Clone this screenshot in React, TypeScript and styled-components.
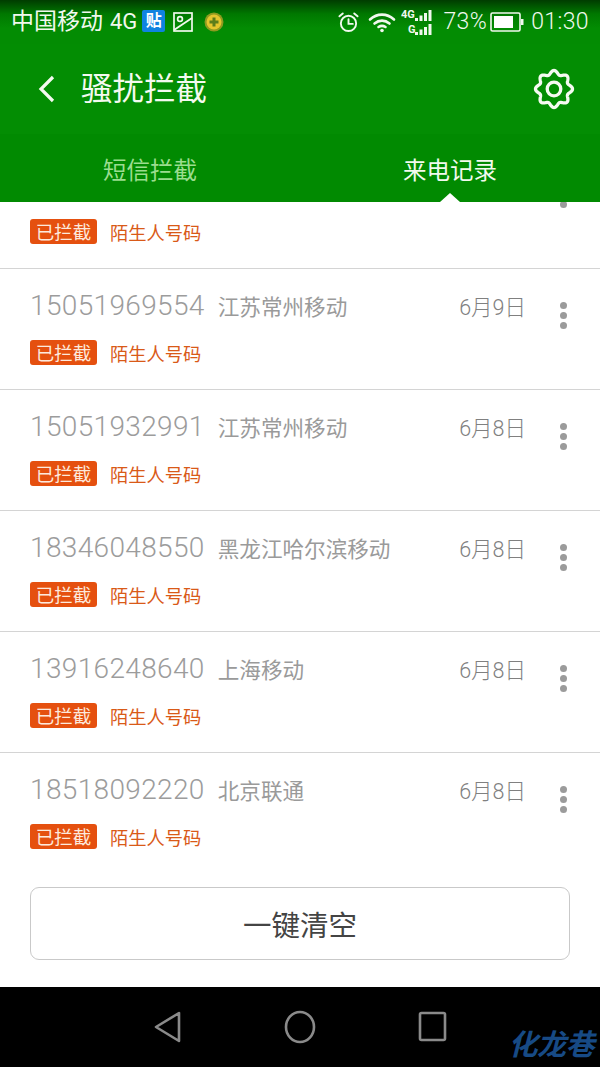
import React from "react";
import styled, { createGlobalStyle } from "styled-components";

const Global = createGlobalStyle`
  html, body { margin: 0; padding: 0; background: #000; }
  #root { width: 600px; height: 1067px; }
  * { box-sizing: border-box; }
`;

const Screen = styled.div`
  width: 600px;
  height: 1067px;
  position: relative;
  display: flex;
  flex-direction: column;
  overflow: hidden;
  background: #fff;
  font-family: Roboto, "Noto Sans CJK SC", sans-serif;
`;

const StatusBar = styled.div`
  height: 44px;
  flex: none;
  display: flex;
  align-items: center;
  justify-content: space-between;
  padding: 0 11px 0 11px;
  color: #f1f8ee;
  background: linear-gradient(#003c00 0, #007800 14px, #038c03 28px, #038c03 100%);
`;

const StatusGroup = styled.div`
  display: flex;
  align-items: center;
`;

const Carrier = styled.span`
  font-size: 23px;
  line-height: 44px;
  white-space: nowrap;
`;

const Network = styled.span`
  font-size: 22px;
  line-height: 44px;
  margin-left: 7px;
`;

const TieBadge = styled.span`
  width: 23px;
  height: 22px;
  margin-left: 5px;
  margin-top: -2px;
  border-radius: 2px;
  background: #0f83e0;
  color: #fff;
  font-size: 16px;
  font-weight: 700;
  line-height: 22px;
  text-align: center;
`;

const StatusText = styled.span<{ $ml: number }>`
  margin-left: ${(p) => p.$ml}px;
  font-size: 23px;
  line-height: 44px;
  letter-spacing: 0.4px;
  font-weight: 300;
`;

const IconSlot = styled.span<{ $ml: number }>`
  display: flex;
  margin-left: ${(p) => p.$ml}px;
`;

const Header = styled.div`
  height: 90px;
  flex: none;
  display: flex;
  align-items: center;
  padding: 0 26px 0 36px;
  background: #038d03;
`;

const Title = styled.h1`
  margin: 2px 0 0 25px;
  flex: 1;
  font-size: 31.5px;
  font-weight: 400;
  line-height: 44px;
  color: #f4faf0;
`;

const Tabs = styled.div`
  height: 68px;
  flex: none;
  display: grid;
  grid-template-columns: 1fr 1fr;
  background: #018a01;
`;

const Tab = styled.div<{ $active?: boolean }>`
  position: relative;
  display: flex;
  align-items: center;
  justify-content: center;
  padding-top: 2px;
  font-size: 23.5px;
  color: ${(p) => (p.$active ? "#f2faee" : "#9bdd8f")};
  ${(p) =>
    p.$active &&
    `&::after {
      content: "";
      position: absolute;
      left: 50%;
      bottom: 0;
      margin-left: -10px;
      border-left: 10px solid transparent;
      border-right: 10px solid transparent;
      border-bottom: 9px solid #fff;
    }`}
`;

const Content = styled.div`
  flex: 1;
  min-height: 0;
  overflow: hidden;
  background: #fff;
  display: flex;
  flex-direction: column;
`;

const List = styled.div`
  margin-top: -54px;
`;

const Row = styled.div`
  position: relative;
  height: 121px;
  padding: 22px 0 0 30px;
  border-bottom: 1px solid #d4d4d4;
  &:last-child {
    border-bottom: none;
  }
`;

const TopLine = styled.div`
  height: 30px;
  display: flex;
  align-items: center;
  padding-right: 75px;
`;

const PhoneNumber = styled.span`
  font-size: 28px;
  font-weight: 300;
  line-height: 30px;
  color: #9c9c9c;
  margin-top: 0;
  letter-spacing: 0.35px;
`;

const Region = styled.span`
  flex: 1;
  margin: 4px 0 0 13px;
  font-size: 21.6px;
  line-height: 30px;
  color: #9a9a9a;
`;

const DateText = styled.span`
  margin: 4px -1px 0 0;
  font-size: 21.5px;
  font-weight: 300;
  line-height: 30px;
  color: #808080;
`;

const More = styled.div`
  position: absolute;
  left: 560px;
  top: 33px;
  display: flex;
  flex-direction: column;
  gap: 3px;
`;

const Dot = styled.span`
  width: 7px;
  height: 7px;
  border-radius: 50%;
  background: #9b9b9b;
`;

const TagLine = styled.div`
  margin-top: 19px;
  height: 25px;
  display: flex;
  align-items: center;
`;

const Tag = styled.span`
  width: 67px;
  height: 25px;
  padding-top: 2px;
  border-radius: 3px;
  background: #e5500f;
  color: #fde9dc;
  font-size: 18.5px;
  line-height: 25px;
  text-align: center;
`;

const Reason = styled.span`
  margin: 3px 0 0 13px;
  font-size: 18.3px;
  line-height: 25px;
  color: #d95a18;
`;

const ClearButton = styled.button`
  display: block;
  width: 540px;
  height: 74px;
  margin: 13px 30px 27px;
  padding: 0;
  background: #fff;
  border: 1px solid #c9c9c9;
  border-radius: 9px;
  font-family: inherit;
  font-size: 28.5px;
  color: #444;
`;

const NavBar = styled.div`
  height: 80px;
  flex: none;
  background: #000;
  display: flex;
  align-items: flex-start;
  justify-content: center;
  gap: 101px;
  padding: 23px 0 0 0;
`;

const Watermark = styled.span`
  position: absolute;
  right: 6px;
  bottom: 10px;
  font-size: 29px;
  line-height: 24px;
  letter-spacing: -0.5px;
  font-style: italic;
  font-weight: 700;
  color: #174a85;
`;

const Alarm = () => (
  <svg width="21" height="22" viewBox="0 0 22 22" fill="none" stroke="#f1f8ee" strokeWidth="2">
    <circle cx="11" cy="12.5" r="8" />
    <path d="M11 8v5h4.5M1.5 5 5 2M20.5 5 17 2" strokeLinecap="round" />
  </svg>
);

const Wifi = () => (
  <svg width="28" height="22" viewBox="0 0 28 22" fill="none" stroke="#f1f8ee" strokeWidth="2.6" strokeLinecap="round">
    <path d="M2 8.5C9 2 19 2 26 8.5M6.5 12.5C11 8.7 17 8.7 21.5 12.5M10.500 16C12.600 14.600 15.400 14.600 17.500 16" />
    <circle cx="14" cy="19.5" r="1.8" fill="#f1f8ee" stroke="none" />
  </svg>
);

const Bars = () => (
  <g fill="#f1f8ee">
    <rect x="0" y="8" width="3" height="3" />
    <rect x="4.5" y="5.5" width="3" height="5.5" />
    <rect x="9" y="3" width="3" height="8" />
    <rect x="13.5" y="0" width="3" height="11" />
  </g>
);

const Signal = () => (
  <svg width="31" height="28" viewBox="0 0 31 28">
    <text x="0" y="10" fontSize="11" fontWeight="700" fill="#f1f8ee" fontFamily="Roboto, sans-serif">4G</text>
    <text x="7" y="25" fontSize="11" fontWeight="700" fill="#f1f8ee" fontFamily="Roboto, sans-serif">G</text>
    <g transform="translate(14 2)"><Bars /></g>
    <g transform="translate(14 16)"><Bars /></g>
  </svg>
);

const Battery = () => (
  <svg width="34" height="20" viewBox="0 0 34 20">
    <rect x="1" y="1" width="29" height="18" rx="1.5" fill="none" stroke="#f1f8ee" strokeWidth="1.6" />
    <rect x="4" y="4" width="19" height="12" fill="#fff" />
    <rect x="31" y="7" width="2.5" height="6" fill="#f1f8ee" />
  </svg>
);

const PictureIcon = () => (
  <svg width="20" height="20" viewBox="0 0 20 20" fill="none" stroke="#f1f8ee" strokeWidth="1.7" style={{ marginLeft: 8 }}>
    <rect x="1" y="1" width="18" height="18" />
    <circle cx="7" cy="7" r="2.4" />
    <path d="M1 18 19 6" />
  </svg>
);

const Ball = () => (
  <svg width="20" height="20" viewBox="0 0 20 20" style={{ marginLeft: 11 }}>
    <circle cx="10" cy="10" r="9.5" fill="#8f9a20" />
    <circle cx="10" cy="10" r="7.5" fill="#e4c52e" />
    <path d="M8.5 5.5h3v3h3v3h-3v3h-3v-3h-3v-3h3z" fill="#5c7d1a" />
  </svg>
);

const BackIcon = () => (
  <svg width="20" height="30" viewBox="0 0 20 30" fill="none" stroke="#f4faf0" strokeWidth="3.2">
    <path d="M17 3 5 15l12 12" />
  </svg>
);

const gearPath = (() => {
  const pts: string[] = [];
  for (let i = 0; i < 180; i++) {
    const a = (i / 180) * Math.PI * 2;
    const r = 16.6 + 1.9 * Math.cos(8 * a);
    pts.push(`${(21 + r * Math.cos(a)).toFixed(2)} ${(21 + r * Math.sin(a)).toFixed(2)}`);
  }
  return `M${pts.join("L")}Z`;
})();

const GearIcon = () => (
  <svg width="42" height="42" viewBox="0 0 42 42" fill="none" stroke="#f6fbf2" strokeWidth="3.3" strokeLinejoin="round" style={{ marginRight: -1 }}>
    <path d={gearPath} />
    <circle cx="21" cy="21" r="6.800" />
  </svg>
);

const NavBack = () => (
  <svg width="30" height="34" viewBox="0 0 30 34" fill="none" stroke="#8a8a8a" strokeWidth="2.6" strokeLinejoin="round">
    <path d="M26 3v28L3 17z" />
  </svg>
);

const NavHome = () => (
  <svg width="32" height="34" viewBox="0 0 32 34" fill="none" stroke="#8a8a8a" strokeWidth="2.6">
    <ellipse cx="16" cy="17" rx="14" ry="15" />
  </svg>
);

const NavRecent = () => (
  <svg width="30" height="34" viewBox="0 0 30 34" fill="none" stroke="#8a8a8a" strokeWidth="2.6" strokeLinejoin="round">
    <rect x="3" y="3" width="25" height="27" rx="1.500" />
  </svg>
);

type Call = { phone?: string; region?: string; date?: string };

const calls: Call[] = [
  {},
  { phone: "15051969554", region: "江苏常州移动", date: "6月9日" },
  { phone: "15051932991", region: "江苏常州移动", date: "6月8日" },
  { phone: "18346048550", region: "黑龙江哈尔滨移动", date: "6月8日" },
  { phone: "13916248640", region: "上海移动", date: "6月8日" },
  { phone: "18518092220", region: "北京联通", date: "6月8日" },
];

export default function App() {
  return (
    <Screen>
      <Global />
      <StatusBar>
        <StatusGroup>
          <Carrier>中国移动</Carrier>
          <Network>4G</Network>
          <TieBadge>贴</TieBadge>
          <PictureIcon />
          <Ball />
        </StatusGroup>
        <StatusGroup>
          <IconSlot $ml={0}><Alarm /></IconSlot>
          <IconSlot $ml={9}><Wifi /></IconSlot>
          <IconSlot $ml={5}><Signal /></IconSlot>
          <StatusText $ml={11}>73%</StatusText>
          <IconSlot $ml={3}><Battery /></IconSlot>
          <StatusText $ml={7}>01:30</StatusText>
        </StatusGroup>
      </StatusBar>
      <Header>
        <BackIcon />
        <Title>骚扰拦截</Title>
        <GearIcon />
      </Header>
      <Tabs>
        <Tab>短信拦截</Tab>
        <Tab $active>来电记录</Tab>
      </Tabs>
      <Content>
        <List>
          {calls.map((c, i) => (
            <Row key={i}>
              <TopLine>
                <PhoneNumber>{c.phone}</PhoneNumber>
                <Region>{c.region}</Region>
                <DateText>{c.date}</DateText>
              </TopLine>
              <More>
                <Dot />
                <Dot />
                <Dot />
              </More>
              <TagLine>
                <Tag>已拦截</Tag>
                <Reason>陌生人号码</Reason>
              </TagLine>
            </Row>
          ))}
        </List>
        <ClearButton>一键清空</ClearButton>
      </Content>
      <NavBar>
        <NavBack />
        <NavHome />
        <NavRecent />
      </NavBar>
      <Watermark>化龙巷</Watermark>
    </Screen>
  );
}
